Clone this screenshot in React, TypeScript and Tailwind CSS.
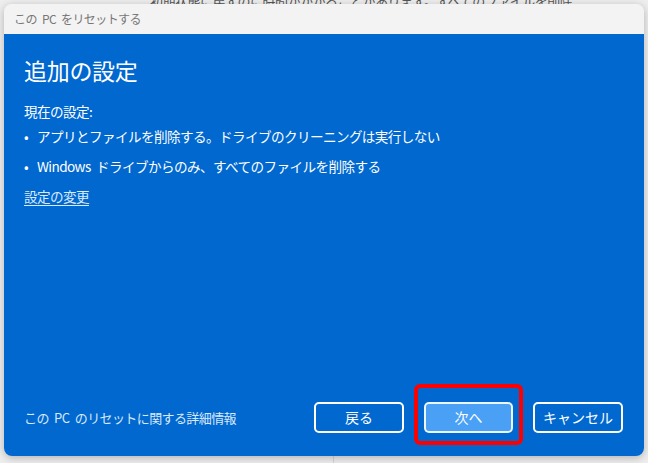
import React from 'react';

const font = { fontFamily: '"Noto Sans CJK JP", "Noto Sans", sans-serif' };

const Button: React.FC<{ label: string; primary?: boolean }> = ({ label, primary }) => (
  <button
    className={
      primary
        ? 'h-[31px] w-[89px] rounded-[5px] border-2 border-white/90 bg-[#4aa0f5] text-[14px] text-white'
        : 'h-[31px] w-[90px] rounded-[5px] border-2 border-white bg-[#0068cf] text-[14px] text-white'
    }
  >
    {label}
  </button>
);

export default function App() {
  return (
    <div className="relative h-[463px] w-[648px] overflow-hidden bg-[#eeeeee] pl-[4px] pt-[4px]" style={font}>
      {/* window behind the dialog */}
      <div className="absolute left-[150px] top-[-9px] whitespace-nowrap text-[13px] tracking-[-0.5px] text-[#555]">
        初期状態に戻すのに時間がかかることがあります。すべてのファイルを削除
      </div>
      <div className="absolute bottom-0 left-[333px] h-[8px] w-px bg-[#d6d6d6]" />

      <div className="relative flex h-[452px] w-[640px] flex-col overflow-hidden rounded-[8px] shadow-[0_2px_8px_rgba(0,0,0,0.25)]">
        <div className="flex h-[30px] items-center bg-[#f3f3f3] pl-[10px] text-[12px] tracking-[-0.6px] text-[#777] [word-spacing:3px]">
          この PC をリセットする
        </div>

        <div className="flex flex-1 flex-col bg-[#0068cf] px-[20px] text-white">
          <h1 className="mt-[20px] text-[23px] leading-[32px] tracking-[-0.3px]">追加の設定</h1>

          <div className="mt-[15px] text-[13.6px] leading-[20px] tracking-[-0.6px] [word-spacing:3px]">
            <p>現在の設定:</p>
            <ul className="mt-[5px] flex flex-col gap-[10px]">
              <li className="flex gap-[9px]">
                <span>•</span>
                <span>アプリとファイルを削除する。ドライブのクリーニングは実行しない</span>
              </li>
              <li className="flex gap-[9px]">
                <span>•</span>
                <span>Windows ドライブからのみ、すべてのファイルを削除する</span>
              </li>
            </ul>
            <a className="mt-[10px] inline-block text-[#dbeafc] underline underline-offset-[3px]">設定の変更</a>
          </div>

          <div className="mt-auto flex items-center pb-[23px] pr-[1px]">
            <span className="flex-1 text-[13px] tracking-[-0.6px] text-[#d9e9fb] [word-spacing:3px]">
              この PC のリセットに関する詳細情報
            </span>
            <div className="flex items-center gap-[20px]">
              <Button label="戻る" />
              <div className="relative">
                <Button label="次へ" primary />
                <div className="pointer-events-none absolute left-[-10px] right-[-10px] top-[-18px] bottom-[-12px] rounded-[6px] border-[4px] border-[#ff0000]" />
              </div>
              <Button label="キャンセル" />
            </div>
          </div>
        </div>
      </div>
    </div>
  );
}
